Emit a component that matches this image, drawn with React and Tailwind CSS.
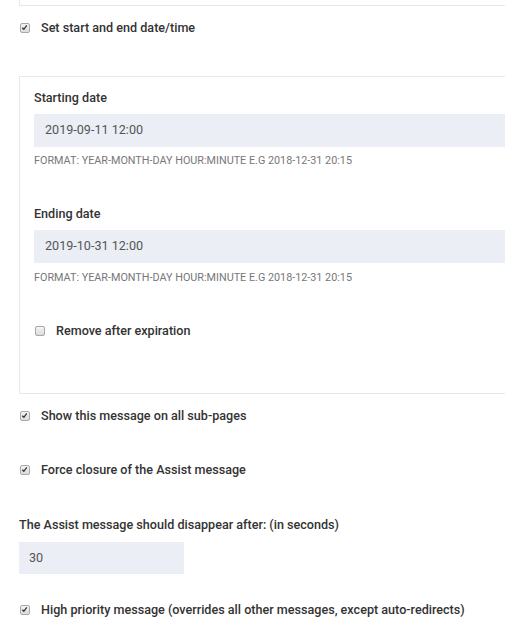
import React from "react";

function Box({ checked }) {
  return (
    <span className="relative inline-block w-[10px] h-[10px] shrink-0 rounded-[2px] border border-[#a9a9a9] bg-gradient-to-b from-[#f4f4f4] to-[#dcdcdc]">
      {checked && (
        <svg viewBox="0 0 10 10" className="absolute left-[0px] top-[0px] w-[8px] h-[8px]">
          <path d="M1.6 4.6 L3.6 6.6 L7.2 1.8" fill="none" stroke="#333" strokeWidth="1.6" />
        </svg>
      )}
    </span>
  );
}

function CheckRow({ checked, children, className = "" }) {
  return (
    <div className={"flex items-center h-[20px] " + className}>
      <Box checked={checked} />
      <span className="ml-[11px] text-[12.6px] font-medium text-[#333] whitespace-nowrap">{children}</span>
    </div>
  );
}

function Format({ className = "" }) {
  return (
    <div className={"h-[14px] leading-[14px] text-[10.8px] text-[#777] uppercase whitespace-nowrap " + className}>
      Format: year-month-day hour:minute e.g 2018-12-31 20:15
    </div>
  );
}

export default function App() {
  return (
    <div
      className="w-[505px] h-[640px] overflow-hidden bg-white"
      style={{ fontFamily: "Roboto, 'Liberation Sans', sans-serif" }}
    >
      <div className="ml-[19px] w-[600px] h-[6px] border-l border-b border-[#e8e8e8]" />

      <CheckRow checked className="mt-[12px] pl-[20px]">Set start and end date/time</CheckRow>

      <div className="ml-[19px] mt-[38px] w-[600px] border border-[#e8e8e8] pl-[14px] pt-[13px] pb-[52px]">
        <div className="h-[16px] leading-[16px] text-[12.6px] font-medium text-[#333]">Starting date</div>
        <div className="mt-[8px] h-[33px] bg-[#ebeef5] flex items-center pl-[11px] text-[12.6px] text-[#555]">2019-09-11 12:00</div>
        <Format className="mt-[7px]" />

        <div className="mt-[38px] h-[16px] leading-[16px] text-[12.6px] font-medium text-[#333]">Ending date</div>
        <div className="mt-[8px] h-[33px] bg-[#ebeef5] flex items-center pl-[11px] text-[12.6px] text-[#555]">2019-10-31 12:00</div>
        <Format className="mt-[8px]" />

        <CheckRow className="mt-[36px] pl-[1px]">Remove after expiration</CheckRow>
      </div>

      <CheckRow checked className="mt-[12px] pl-[20px]">Show this message on all sub-pages</CheckRow>
      <CheckRow checked className="mt-[34px] pl-[20px]">Force closure of the Assist message</CheckRow>

      <div className="mt-[37px] ml-[19px] h-[16px] leading-[16px] text-[12.6px] font-medium text-[#333] whitespace-nowrap">
        The Assist message should disappear after: (in seconds)
      </div>
      <div className="mt-[9px] ml-[19px] w-[165px] h-[32px] bg-[#ebeef5] flex items-center pl-[10px] text-[12.6px] text-[#555]">30</div>

      <CheckRow checked className="mt-[26px] pl-[20px]">High priority message (overrides all other messages, except auto-redirects)</CheckRow>
    </div>
  );
}
